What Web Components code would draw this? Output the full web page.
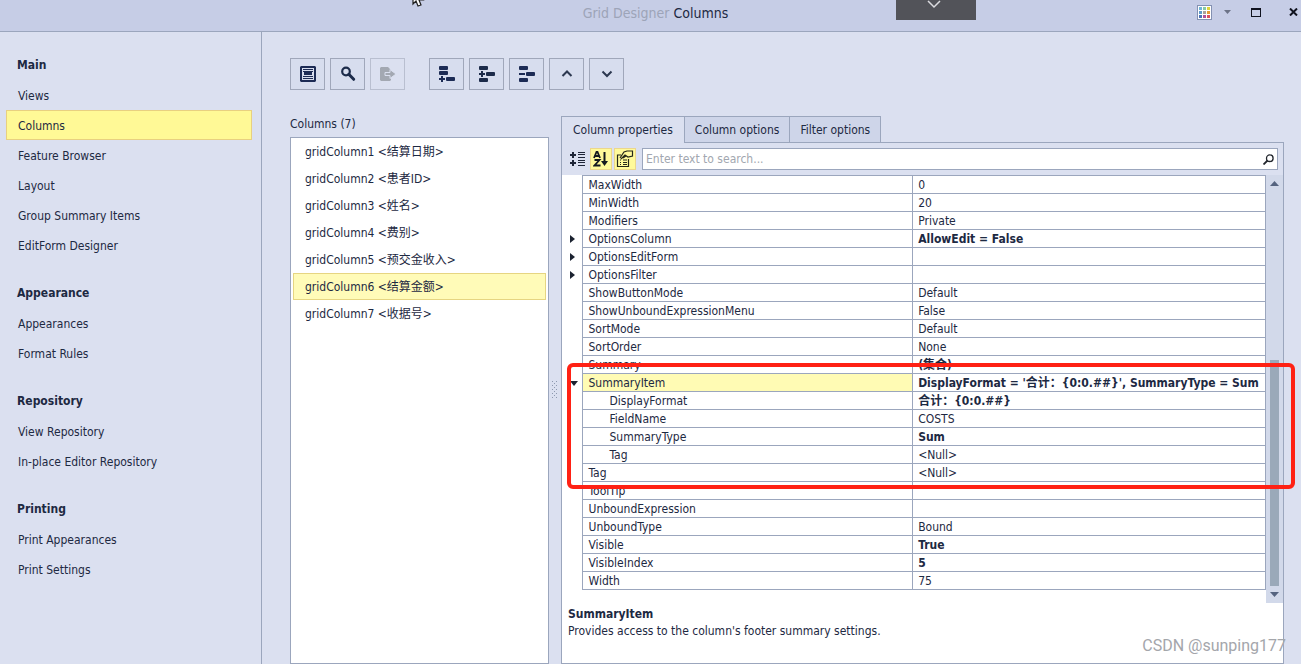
<!DOCTYPE html>
<html lang="en">
<head>
<meta charset="utf-8">
<title>Grid Designer Columns</title>
<style>
  html, body { margin: 0; }
  body {
    --line: #9ba6bd;
    --bg: #dbe0f0;
    --bar: #c6cde6;
    --hot: #fffa9a;
    --ink: #1d2942;
    background: var(--bg);
    color: var(--ink);
    font: 12px/18px "DejaVu Sans Condensed", "Noto Sans CJK SC", sans-serif;
  }
</style>
</head>
<body>
<designer-window>
  <title-bar slot="title">
    <span slot="product">Grid Designer</span><span slot="page">Columns</span>
  </title-bar>

  <nav-group slot="nav" heading="Main">
    <nav-item>Views</nav-item>
    <nav-item current>Columns</nav-item>
    <nav-item>Feature Browser</nav-item>
    <nav-item>Layout</nav-item>
    <nav-item>Group Summary Items</nav-item>
    <nav-item>EditForm Designer</nav-item>
  </nav-group>
  <nav-group slot="nav" heading="Appearance">
    <nav-item>Appearances</nav-item>
    <nav-item>Format Rules</nav-item>
  </nav-group>
  <nav-group slot="nav" heading="Repository">
    <nav-item>View Repository</nav-item>
    <nav-item>In-place Editor Repository</nav-item>
  </nav-group>
  <nav-group slot="nav" heading="Printing">
    <nav-item>Print Appearances</nav-item>
    <nav-item>Print Settings</nav-item>
  </nav-group>

  <tool-group slot="tools">
    <tool-button label="Show field list"><svg width="16" height="16" viewBox="0 0 16 16"><path fill="#1c2b55" fill-rule="evenodd" d="M1 0h14l1 1v14l-1 1H1l-1-1V1zM2 2v12h12V2z"/><path fill="#1c2b55" d="M3 3h10v1H3zM4 6h8v3H4zM3 5h10v1H3zM3 10h10v1H3zM3 12h10v1H3z"/></svg></tool-button>
    <tool-button label="Retrieve fields"><svg width="16" height="16" viewBox="0 0 16 16"><circle cx="6" cy="5.5" r="3.8" fill="none" stroke="#1c2b4a" stroke-width="2.2"/><path d="M8.8 8.3l4.9 5" stroke="#1c2b4a" stroke-width="3" stroke-linecap="round"/></svg></tool-button>
    <tool-button label="Export" disabled><svg width="16" height="16" viewBox="0 0 16 16"><path fill="#a3a8b2" d="M1 1h7l3 3v2H6v4h5v4l-1 1H1l-1-1V2z"/><path fill="#a3a8b2" stroke="#dbe0f0" stroke-width="1" d="M5 6.500h5V3.500L16 8l-6 4.500v-3H5z"/></svg></tool-button>
  </tool-group>
  <tool-group slot="tools">
    <tool-button label="Add column"><svg width="16" height="16" viewBox="0 0 16 16" fill="#1c2b55"><rect width="9" height="4" rx="1"/><rect y="5" width="9" height="4" rx="1"/><rect x="7" y="11" width="9" height="4" rx="1"/><path d="M2 10h2v2h2v2H4v2H2v-2H0v-2h2z"/></svg></tool-button>
    <tool-button label="Insert column"><svg width="16" height="16" viewBox="0 0 16 16" fill="#1c2b4a"><rect width="9" height="4" rx="1"/><rect x="7" y="6" width="9" height="4" rx="1"/><rect y="12" width="9" height="4" rx="1"/><path d="M2 5h2v2h2v2H4v2H2V9H0V7h2z"/></svg></tool-button>
    <tool-button label="Remove column"><svg width="16" height="16" viewBox="0 0 16 16" fill="#1c2b55"><rect width="9" height="4" rx="1"/><rect x="7" y="6" width="9" height="4" rx="1"/><rect y="12" width="9" height="4" rx="1"/><path d="M0 7h6v2H0z"/></svg></tool-button>
    <tool-button label="Move up"><svg width="16" height="16" viewBox="0 0 16 16"><path d="M3.500 10L8 5.500l4.500 4.500" fill="none" stroke="#2c3850" stroke-width="2"/></svg></tool-button>
    <tool-button label="Move down"><svg width="16" height="16" viewBox="0 0 16 16"><path d="M3.500 5.500L8 10l4.500-4.500" fill="none" stroke="#2c3850" stroke-width="2"/></svg></tool-button>
  </tool-group>

  <column-list slot="list" caption="Columns (7)">
    <column-item>gridColumn1 &lt;结算日期&gt;</column-item>
    <column-item>gridColumn2 &lt;患者ID&gt;</column-item>
    <column-item>gridColumn3 &lt;姓名&gt;</column-item>
    <column-item>gridColumn4 &lt;费别&gt;</column-item>
    <column-item>gridColumn5 &lt;预交金收入&gt;</column-item>
    <column-item selected>gridColumn6 &lt;结算金额&gt;</column-item>
    <column-item>gridColumn7 &lt;收据号&gt;</column-item>
  </column-list>

  <tab-panel slot="panel">
    <tab-button slot="tabs" active>Column properties</tab-button>
    <tab-button slot="tabs">Column options</tab-button>
    <tab-button slot="tabs">Filter options</tab-button>
    <search-bar></search-bar>
    <property-grid></property-grid>
    <property-hint>
      <span slot="name">SummaryItem</span>
      Provides access to the column's footer summary settings.
    </property-hint>
  </tab-panel>
</designer-window>

<script>
const define = (name, html, setup) => {
  const template = document.createElement("template");
  template.innerHTML = html;
  customElements.define(name, class extends HTMLElement {
    constructor() {
      super();
      this.attachShadow({ mode: "open" }).append(template.content.cloneNode(true));
    }
    connectedCallback() {
      if (setup) setup(this, this.shadowRoot);
    }
  });
};

define("designer-window", `
<style>
  :host { display: grid; grid-template: auto 1fr / 262px minmax(0, 1fr); min-height: 100vh; position: relative; overflow: hidden; }
  header { grid-column: 1 / -1; }
  nav { border-right: 1px solid var(--line); }
  main { display: flex; flex-direction: column; padding: 26px 17px 0 28px; }
  .tools { display: flex; gap: 24px; }
  .work { flex: 1; display: grid; grid-template-columns: 259px 12px minmax(0, 1fr); margin-top: 26px; }
  .split { display: grid; place-items: center; }
  .handle { position: absolute; top: 0; right: 325px; width: 80px; height: 20px; border: 0; padding: 0; background: #525359; display: grid; justify-items: center; align-items: start; }
  .cursor { position: absolute; top: 0; left: 412px; }
  .mark { position: absolute; right: 15px; bottom: 7px; font: 16px/22px Roboto, sans-serif; color: #a4a6ab; }
</style>
<header><slot name="title"></slot></header>
<nav aria-label="Designer pages"><slot name="nav"></slot></nav>
<main>
  <div class="tools"><slot name="tools"></slot></div>
  <div class="work">
    <slot name="list"></slot>
    <div class="split"><svg width="6" height="18" fill="#8d98af"><path d="M0 0h1v1H0zM4 0h1v1H4zM2 2h1v1H2zM0 4h1v1H0zM4 4h1v1H4zM2 6h1v1H2zM0 8h1v1H0zM4 8h1v1H4zM2 10h1v1H2zM0 12h1v1H0zM4 12h1v1H4zM2 14h1v1H2zM0 16h1v1H0zM4 16h1v1H4z"/></svg></div>
    <slot name="panel"></slot>
  </div>
</main>
<button class="handle" aria-label="Show toolbar"><svg width="18" height="10"><path d="M1 1l6 6 6-6" fill="none" stroke="#dcdce0" stroke-width="1.500"/></svg></button>
<svg class="cursor" width="14" height="8"><path d="M1-8V4l3-3 2 5 3-1-2-5h4z" fill="#fff" stroke="#222" stroke-width="1.200"/></svg>
<div class="mark">CSDN @sunping177</div>`);

define("title-bar", `
<style>
  :host { display: grid; grid-template-columns: 1fr auto 1fr; align-items: center; height: 31px; padding-left: 10px; background: var(--bar); border-bottom: 1px solid var(--line); }
  h1 { grid-column: 2; margin: 0; padding-bottom: 5px; font-size: 14px; line-height: 20px; font-weight: 400; display: flex; gap: 4px; white-space: nowrap; }
  slot[name=product] { color: #9da4b8; }
  .buttons { display: flex; align-items: center; justify-content: flex-end; height: 24px; align-self: start; padding-right: 3px; }
  button { border: 0; padding: 0; background: none; display: flex; color: #10131f; }
  .skin { margin-right: 12px; }
  .more { margin-right: 20px; }
  .max { margin-right: 28px; }
</style>
<h1><slot name="product"></slot><slot name="page"></slot></h1>
<div class="buttons">
  <button class="skin" aria-label="Skin"><svg width="15" height="15"><path fill="#8391b2" d="M0 0h15v15H0z"/><path fill="#fff" d="M1 1h13v13H1z"/><path fill="#6fb5d8" d="M2 2h3v3H2z"/><path fill="#86c9a4" d="M6 2h3v3H6z"/><path fill="#e0d43a" d="M10 2h3v3h-3z"/><path fill="#5e9ccc" d="M2 6h3v3H2z"/><path fill="#a9a29b" d="M6 6h3v3H6z"/><path fill="#e79a36" d="M10 6h3v3h-3z"/><path fill="#4c72b8" d="M2 10h3v3H2z"/><path fill="#b0529b" d="M6 10h3v3H6z"/><path fill="#dc5060" d="M10 10h3v3h-3z"/></svg></button>
  <button class="more" aria-label="More skins"><svg width="7" height="4"><path d="M0 0h7L3.500 4z" fill="#6c7387"/></svg></button>
  <button class="max" aria-label="Maximize"><svg width="10" height="9"><path fill="currentColor" fill-rule="evenodd" d="M0 0h10v9H0zM1 2v6h8V2z"/></svg></button>
  <button aria-label="Close"><svg width="9" height="8"><path d="M1 .5l7 7M8 .5l-7 7" stroke="currentColor" stroke-width="2"/></svg></button>
</div>`);

define("nav-group", `
<style>
  :host { display: block; }
  h2 { margin: 0; padding: 18px 0 0 17px; font-size: 12px; line-height: 30px; }
</style>
<h2></h2><slot></slot>`, (el, root) => {
  root.querySelector("h2").textContent = el.getAttribute("heading");
});

define("nav-item", `
<style>
  :host { display: block; margin: 0 9px 0 6px; }
  a { display: block; box-sizing: border-box; height: 30px; padding-left: 11px; border: 1px solid transparent; line-height: 30px; color: inherit; text-decoration: none; }
  :host([current]) a { background: #fff996; border-color: #e8d080; }
</style>
<a href="#"><slot></slot></a>`);

define("tool-group", `
<style>:host { display: flex; gap: 5px; }</style><slot></slot>`);

define("tool-button", `
<style>
  :host { display: block; }
  button { width: 35px; height: 32px; padding: 0; border: 1px solid #a0a7ba; background: #d7ddee; display: grid; place-items: center; }
  button:disabled { border-color: #b9bfd0; background: #dbe0f0; }
</style>
<button><slot></slot></button>`, (el, root) => {
  const button = root.querySelector("button");
  button.setAttribute("aria-label", el.getAttribute("label"));
  button.disabled = el.hasAttribute("disabled");
});

define("column-list", `
<style>
  :host { display: flex; flex-direction: column; }
  h2 { margin: 0; font-size: 12px; font-weight: 400; line-height: 16px; padding-bottom: 5px; }
  .box { flex: 1; background: #fff; border: 1px solid var(--line); padding: 0 2px; }
</style>
<h2></h2><div class="box" role="listbox"><slot></slot></div>`, (el, root) => {
  root.querySelector("h2").textContent = el.getAttribute("caption");
});

define("column-item", `
<style>
  :host { display: block; box-sizing: border-box; height: 27px; padding-left: 11px; border: 1px solid transparent; line-height: 27px; white-space: nowrap; }
  :host([selected]) { background: #fffbb8; border-color: #e6d582; }
</style>
<slot></slot>`, el => {
  el.setAttribute("role", "option");
  el.setAttribute("aria-selected", el.hasAttribute("selected"));
});

define("tab-panel", `
<style>
  :host { display: flex; flex-direction: column; }
  .tabs { display: flex; height: 26px; }
  .body { flex: 1; display: flex; flex-direction: column; border: 1px solid var(--line); background: #fff; }
</style>
<div class="tabs" role="tablist"><slot name="tabs"></slot></div>
<div class="body"><slot></slot></div>`);

define("tab-button", `
<style>
  :host { display: flex; margin-right: -1px; }
  button { border: 1px solid var(--line); border-bottom: 0; padding: 0 10px; background: #ced5e9; font: inherit; color: inherit; white-space: nowrap; }
  :host([active]) { z-index: 1; margin-bottom: -1px; }
  :host([active]) button { padding: 0 11px 1px; background: var(--bg); }
</style>
<button role="tab"><slot></slot></button>`);

define("search-bar", `
<style>
  :host { display: flex; align-items: center; height: 32px; padding: 0 5px 0 4px; background: var(--bg); color: #1f2638; }
  button { width: 22px; height: 22px; margin-right: 2px; padding: 0; border: 1px solid transparent; background: none; color: inherit; display: grid; place-items: center; }
  .on { background: #fffa9a; border-color: #ecd78c; }
  label { flex: 1; display: flex; align-items: center; height: 20px; margin-left: 4px; border: 1px solid var(--line); background: #fff; padding-right: 3px; }
  input { flex: 1; min-width: 0; border: 0; outline: 0; padding: 0 3px; background: none; font: inherit; color: inherit; }
  input::placeholder { color: #a2a7b0; opacity: 1; }
</style>
<button aria-label="Categorized"><svg width="15" height="14"><path fill="currentColor" d="M2 0h2v2h2v2H4v2H2V4H0V2h2zM2 8h2v2h2v2H4v2H2v-2H0v-2h2zM8 0h7v1H8zM8 2h7v1H8zM8 5h7v1H8zM8 8h7v1H8zM8 10h7v1H8zM8 13h7v1H8z"/></svg></button>
<button class="on" aria-label="Alphabetical"><svg width="16" height="16" fill="none" stroke="#151a20" stroke-width="1.800"><path d="M1 7L3.500 1h1L7 7M2 5h4M1.500 9h5L1.500 14.500h6"/><path d="M11.500 1v12" stroke-width="2"/><path d="M8 10h7l-3.500 5z" fill="#151a20" stroke="none"/></svg></button>
<button class="on" aria-label="Show description"><svg width="18" height="18" fill="none" stroke="#242719" stroke-width="1.200"><path d="M5 5H1.500v11.500h11V9"/><path d="M4 8l4-6 3-1h5.500v5L12 7 9 5 5 9M7 8l3-2"/><path d="M4 10h1M7 10h4M4 12.500h1M7 12.500h4M4 14.500h1M7 14.500h4"/></svg></button>
<label><input type="text" aria-label="Search properties" placeholder="Enter text to search..."><svg width="11" height="11" fill="none" stroke="#22262d" stroke-width="1.300"><circle cx="6.800" cy="4.200" r="3.300"/><path d="M4.500 6.500L.5 10.500" stroke-width="1.800"/></svg></label>`);

define("property-grid", `
<style>
  :host { display: flex; position: relative; height: 428px; }
  .view { flex: 1; min-width: 0; }
  table { width: 100%; border-collapse: collapse; table-layout: fixed; border-right: 1px solid var(--line); }
  .gutter { width: 20px; }
  .name { width: 47%; }
  td, th { height: 15px; padding: 2px 0 0 6px; border: 1px solid var(--line); text-align: left; font-weight: 400; line-height: 15px; white-space: nowrap; overflow: hidden; }
  td:first-child { border: 0; padding: 1px 0 0 8px; }
  td:last-child { padding-left: 5px; }
  .child th { padding-left: 27px; }
  .current th { background: #fffbb4; }
  .set td { font-weight: 700; }
  svg { display: block; }
  .scroll { width: 17px; box-sizing: border-box; display: flex; flex-direction: column; align-items: center; padding: 6px 0; background: #d2d9ea; }
  .thumb { width: 9px; height: 226px; margin: auto 0 6px; background: #9aa9b9; }
  .frame { position: absolute; left: 5px; right: -12px; top: 188px; height: 118px; border: 4px solid #ff2114; border-radius: 6px; }
</style>
<div class="view"><table aria-label="Properties">
  <colgroup><col class="gutter"><col class="name"><col></colgroup><tbody></tbody>
</table></div>
<div class="scroll"><svg width="9" height="5"><path d="M0 5h9L4.500 0z" fill="#55637f"/></svg><div class="thumb"></div><svg width="9" height="5"><path d="M0 0h9L4.500 5z" fill="#55637f"/></svg></div>
<div class="frame"></div>`, (el, root) => {
  // name, value, flags: b = changed value, c = child, x = collapsed, o = open and current
  const rows = [
    ["MaxWidth", "0"], ["MinWidth", "20"], ["Modifiers", "Private"],
    ["OptionsColumn", "AllowEdit = False", "xb"], ["OptionsEditForm", "", "x"], ["OptionsFilter", "", "x"],
    ["ShowButtonMode", "Default"], ["ShowUnboundExpressionMenu", "False"],
    ["SortMode", "Default"], ["SortOrder", "None"], ["Summary", "(集合)", "b"],
    ["SummaryItem", "DisplayFormat = '合计：{0:0.##}', SummaryType = Sum", "ob"],
    ["DisplayFormat", "合计：{0:0.##}", "cb"], ["FieldName", "COSTS", "c"],
    ["SummaryType", "Sum", "cb"], ["Tag", "<Null>", "c"], ["Tag", "<Null>"],
    ["ToolTip", ""], ["UnboundExpression", ""], ["UnboundType", "Bound"],
    ["Visible", "True", "b"], ["VisibleIndex", "5", "b"], ["Width", "75"]
  ];
  const body = root.querySelector("tbody");
  body.replaceChildren();
  for (const [name, value, flags = ""] of rows) {
    const row = body.insertRow();
    row.classList.toggle("set", flags.includes("b"));
    row.classList.toggle("child", flags.includes("c"));
    row.classList.toggle("current", flags.includes("o"));
    const mark = row.insertCell();
    if (flags.includes("x")) mark.innerHTML = '<svg width="5" height="8"><path d="M0 0v8l5-4z" fill="#1b2230"/></svg>';
    if (flags.includes("o")) mark.innerHTML = '<svg width="8" height="5"><path d="M0 0h8L4 5z" fill="#1b2230"/></svg>';
    const head = document.createElement("th");
    head.scope = "row";
    head.textContent = name;
    row.append(head);
    row.insertCell().textContent = value;
  }
});

define("property-hint", `
<style>
  :host { display: block; padding: 3px 6px; line-height: 17px; }
  strong { display: block; }
</style>
<strong><slot name="name"></slot></strong><slot></slot>`);
</script>
</body>
</html>
